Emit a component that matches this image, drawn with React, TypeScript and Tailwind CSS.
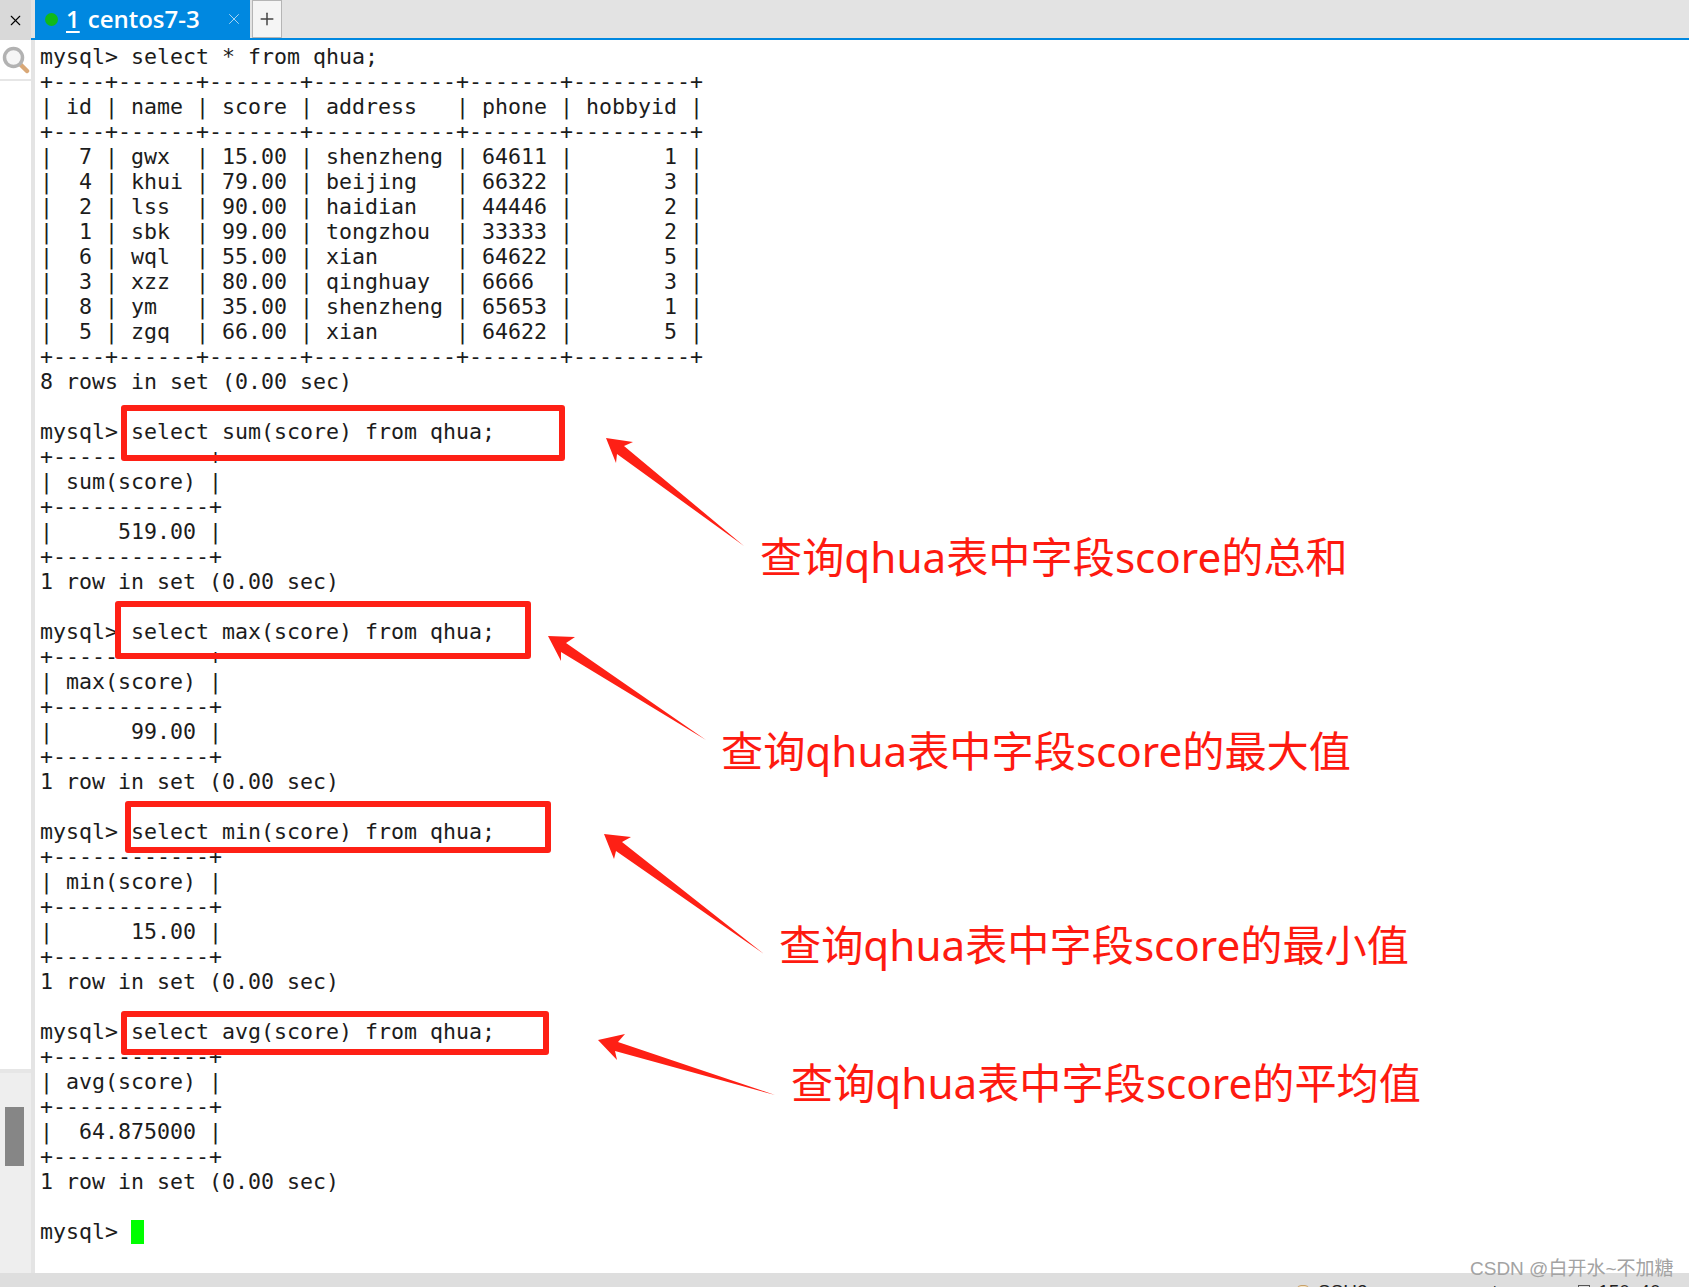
import { X, Plus } from "lucide-react";

const LINES = [
  "mysql> select * from qhua;",
  "+----+------+-------+-----------+-------+---------+",
  "| id | name | score | address   | phone | hobbyid |",
  "+----+------+-------+-----------+-------+---------+",
  "|  7 | gwx  | 15.00 | shenzheng | 64611 |       1 |",
  "|  4 | khui | 79.00 | beijing   | 66322 |       3 |",
  "|  2 | lss  | 90.00 | haidian   | 44446 |       2 |",
  "|  1 | sbk  | 99.00 | tongzhou  | 33333 |       2 |",
  "|  6 | wql  | 55.00 | xian      | 64622 |       5 |",
  "|  3 | xzz  | 80.00 | qinghuay  | 6666  |       3 |",
  "|  8 | ym   | 35.00 | shenzheng | 65653 |       1 |",
  "|  5 | zgq  | 66.00 | xian      | 64622 |       5 |",
  "+----+------+-------+-----------+-------+---------+",
  "8 rows in set (0.00 sec)",
  "",
  "mysql> select sum(score) from qhua;",
  "+------------+",
  "| sum(score) |",
  "+------------+",
  "|     519.00 |",
  "+------------+",
  "1 row in set (0.00 sec)",
  "",
  "mysql> select max(score) from qhua;",
  "+------------+",
  "| max(score) |",
  "+------------+",
  "|      99.00 |",
  "+------------+",
  "1 row in set (0.00 sec)",
  "",
  "mysql> select min(score) from qhua;",
  "+------------+",
  "| min(score) |",
  "+------------+",
  "|      15.00 |",
  "+------------+",
  "1 row in set (0.00 sec)",
  "",
  "mysql> select avg(score) from qhua;",
  "+------------+",
  "| avg(score) |",
  "+------------+",
  "|  64.875000 |",
  "+------------+",
  "1 row in set (0.00 sec)",
  "",
];

// red call-out boxes drawn on top of the terminal text
const BOXES = [
  "left-[121px] top-[405px] h-[56px] w-[444px]",
  "left-[115px] top-[601px] h-[58px] w-[416px]",
  "left-[125px] top-[801px] h-[52px] w-[426px]",
  "left-[121px] top-[1011px] h-[44px] w-[428px]",
];

const NOTES = [
  { text: "查询qhua表中字段score的总和", cls: "left-[760px] top-[527px]" },
  { text: "查询qhua表中字段score的最大值", cls: "left-[721px] top-[721px]" },
  { text: "查询qhua表中字段score的最小值", cls: "left-[779px] top-[915px]" },
  { text: "查询qhua表中字段score的平均值", cls: "left-[791px] top-[1053px]" },
];

const ARROWS = [
  "606,438 633,442 624,446 744,546 617,454 616,463",
  "548,636 575,637 566,643 706,740 561,652 561,661",
  "604,834 631,837 622,842 764,954 616,851 614,859",
  "598,1040 625,1034 618,1042 775,1095 615,1051 617,1060",
];

export default function App() {
  return (
    <div className="relative flex h-[1287px] w-[1689px] flex-col overflow-hidden bg-white">
      <div className="flex h-[40px] shrink-0 border-b-2 border-[#0088e0] bg-[#e3e3e3]">
        <div className="flex h-[40px] w-[31px] items-center justify-center bg-[#d9d9d9]">
          <X size={17} strokeWidth={1.6} className="text-black" />
        </div>
        <div className="ml-[4px] flex h-[40px] w-[215px] items-center bg-[#0088e0] pb-[2px] pl-[10px] font-['Open_Sans',sans-serif] text-[24px] font-semibold text-white">
          <span className="h-[13px] w-[13px] rounded-full bg-[#10b91a]" />
          <span className="ml-[8px] underline underline-offset-[3px]">1</span>
          <span className="ml-[8px]">centos7-3</span>
          <X size={18} strokeWidth={1.2} className="ml-[25px] text-[#b9dcf5]" />
        </div>
        <div className="ml-[2px] flex h-[38px] w-[30px] items-center justify-center border border-[#b5b5b5] bg-[#f5f5f5]">
          <Plus size={20} strokeWidth={1.8} className="text-[#444444]" />
        </div>
      </div>
      <div className="flex min-h-0 flex-1">
        <div className="flex w-[31px] shrink-0 flex-col">
          <div className="flex h-[41px] items-center justify-center border-b-2 border-[#e6e6e6]">
            <svg width="28" height="28" viewBox="0 0 28 28">
              <line x1="18" y1="18" x2="25" y2="25" stroke="#d9a877" strokeWidth="4.5" strokeLinecap="round" />
              <circle cx="11.5" cy="11.5" r="9" fill="#f6f6f6" stroke="#b2b2b2" strokeWidth="3.5" />
            </svg>
          </div>
          <div className="h-[988px]" />
          <div className="flex-1 border-t-4 border-[#e6e6e6] bg-[#eeeeee] px-[5px] pt-[34px]">
            <div className="h-[59px] w-[19px] bg-[#868686]" />
          </div>
        </div>
        <div className="w-[4px] shrink-0 bg-[#e4e4e4]" />
        <div className="min-w-0 flex-1 whitespace-pre pl-[5px] pt-[4px] font-['DejaVu_Sans_Mono',monospace] text-[21.6px] leading-[25px] text-[#1c1c1c]">
          {LINES.map((line, i) => (
            <div key={i} className="h-[25px]">
              {line}
            </div>
          ))}
          <div className="flex h-[25px]">
            <span>{"mysql> "}</span>
            <span className="mt-[1px] h-[24px] w-[13px] bg-[#00ff00]" />
          </div>
        </div>
      </div>
      <div className="h-[14px] shrink-0 overflow-hidden bg-[#dedede]">
        <div className="flex pl-[1297px] pt-[9px] font-['Liberation_Sans',sans-serif] text-[19px] leading-[20px] text-[#222222]">
          <span className="mr-[9px] mt-[3px] h-[14px] w-[12px] rounded-sm border border-[#c9a26a] bg-[#f3e3c4]" />
          <span>SSH2</span>
          <span className="ml-[115px]">xterm</span>
          <span className="ml-[48px] mt-[3px] h-[14px] w-[12px] border border-[#555555]" />
          <span className="ml-[8px]">150x40</span>
        </div>
      </div>

      {BOXES.map((cls) => (
        <div key={cls} className={`absolute rounded-[3px] border-[6px] border-[#fe2015] ${cls}`} />
      ))}
      <svg className="pointer-events-none absolute left-0 top-0" width="1689" height="1287">
        {ARROWS.map((points) => (
          <polygon key={points} points={points} fill="#fe2015" />
        ))}
      </svg>
      {NOTES.map((note) => (
        <div
          key={note.text}
          className={`absolute whitespace-nowrap font-['Noto_Sans','Noto_Sans_CJK_SC',sans-serif] text-[42.2px] leading-[60px] text-[#fe1a10] ${note.cls}`}
        >
          {note.text}
        </div>
      ))}
      <div className="absolute left-[1470px] top-[1255px] whitespace-nowrap font-['Liberation_Sans','Noto_Sans_CJK_SC',sans-serif] text-[19px] leading-[28px] text-[#a3a3a3]">
        CSDN @白开水~不加糖
      </div>
    </div>
  );
}
